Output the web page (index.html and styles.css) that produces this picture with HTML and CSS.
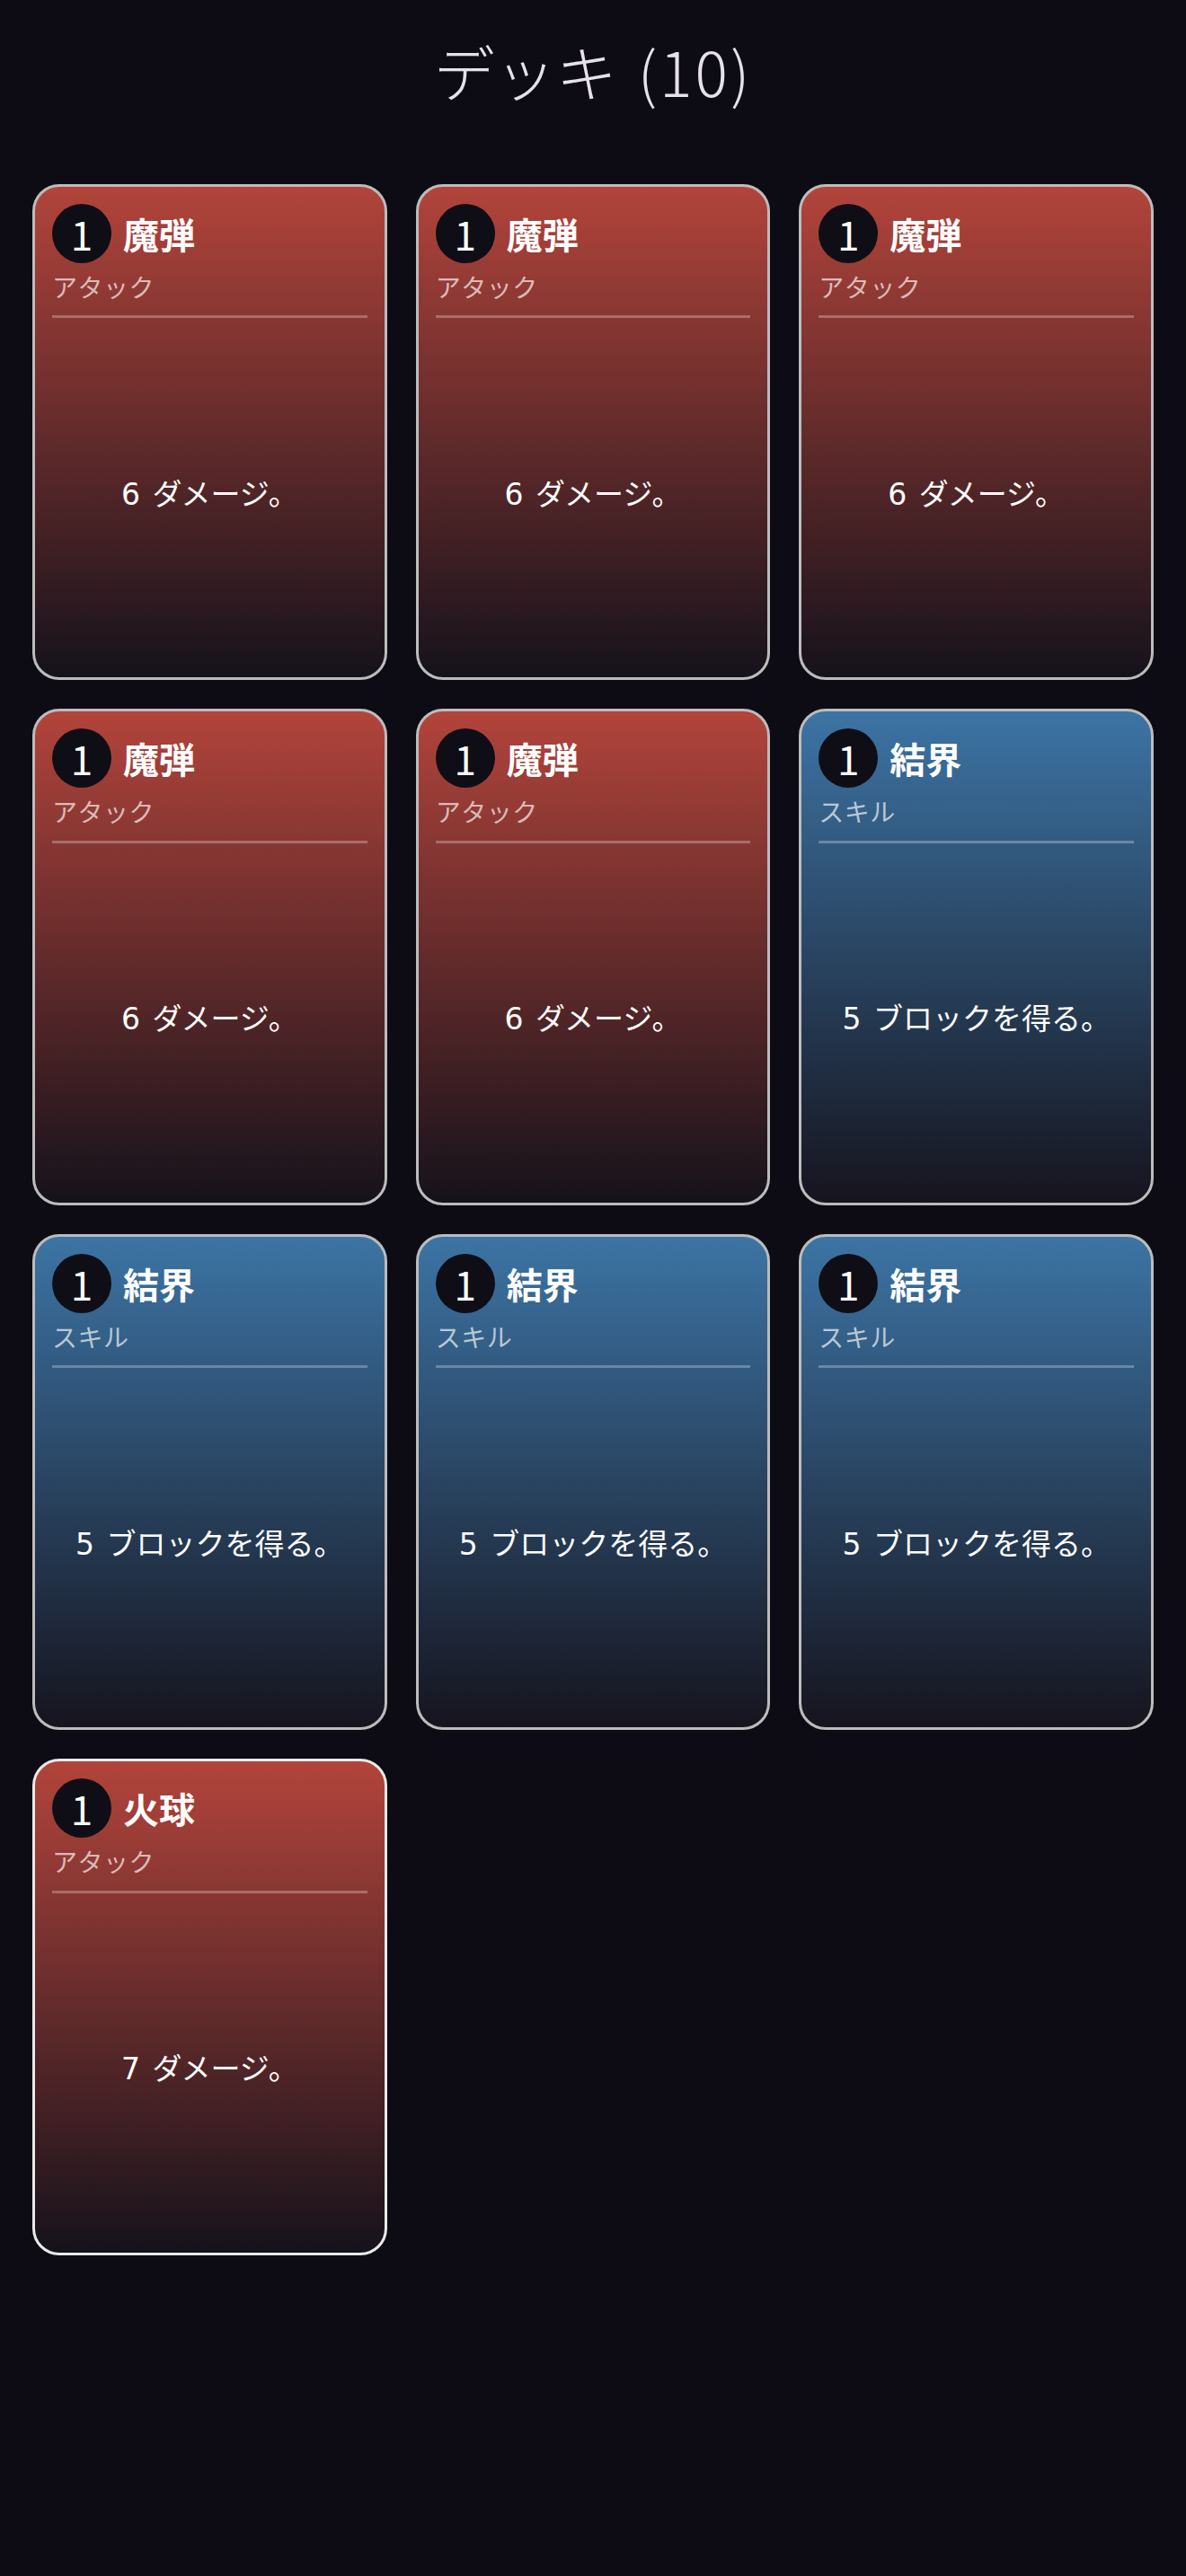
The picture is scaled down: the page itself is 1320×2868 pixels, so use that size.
FILE: index.html
```html
<!DOCTYPE html>
<html lang="ja">
<head>
<meta charset="utf-8">
<title>デッキ</title>
<link rel="stylesheet" href="styles.css">
</head>
<body>
<main class="page">
  <h1 class="title">デッキ <span class="count">(10)</span></h1>
  <div class="deck">
    <div class="card card-attack">
      <div class="card-head">
        <div class="card-top"><span class="cost">1</span><span class="name">魔弾</span></div>
        <div class="type">アタック</div>
      </div>
      <div class="card-body">6 ダメージ。</div>
    </div>
    <div class="card card-attack">
      <div class="card-head">
        <div class="card-top"><span class="cost">1</span><span class="name">魔弾</span></div>
        <div class="type">アタック</div>
      </div>
      <div class="card-body">6 ダメージ。</div>
    </div>
    <div class="card card-attack">
      <div class="card-head">
        <div class="card-top"><span class="cost">1</span><span class="name">魔弾</span></div>
        <div class="type">アタック</div>
      </div>
      <div class="card-body">6 ダメージ。</div>
    </div>
    <div class="card card-attack">
      <div class="card-head">
        <div class="card-top"><span class="cost">1</span><span class="name">魔弾</span></div>
        <div class="type">アタック</div>
      </div>
      <div class="card-body">6 ダメージ。</div>
    </div>
    <div class="card card-attack">
      <div class="card-head">
        <div class="card-top"><span class="cost">1</span><span class="name">魔弾</span></div>
        <div class="type">アタック</div>
      </div>
      <div class="card-body">6 ダメージ。</div>
    </div>
    <div class="card card-skill">
      <div class="card-head">
        <div class="card-top"><span class="cost">1</span><span class="name">結界</span></div>
        <div class="type">スキル</div>
      </div>
      <div class="card-body">5 ブロックを得る。</div>
    </div>
    <div class="card card-skill">
      <div class="card-head">
        <div class="card-top"><span class="cost">1</span><span class="name">結界</span></div>
        <div class="type">スキル</div>
      </div>
      <div class="card-body">5 ブロックを得る。</div>
    </div>
    <div class="card card-skill">
      <div class="card-head">
        <div class="card-top"><span class="cost">1</span><span class="name">結界</span></div>
        <div class="type">スキル</div>
      </div>
      <div class="card-body">5 ブロックを得る。</div>
    </div>
    <div class="card card-skill">
      <div class="card-head">
        <div class="card-top"><span class="cost">1</span><span class="name">結界</span></div>
        <div class="type">スキル</div>
      </div>
      <div class="card-body">5 ブロックを得る。</div>
    </div>
    <div class="card card-attack card-new">
      <div class="card-head">
        <div class="card-top"><span class="cost">1</span><span class="name">火球</span></div>
        <div class="type">アタック</div>
      </div>
      <div class="card-body">7 ダメージ。</div>
    </div>
  </div>
</main>
</body>
</html>
```

FILE: styles.css
```css
html, body {
  margin: 0;
  padding: 0;
  background: #0d0b14;
}

body {
  font-family: "Noto Sans CJK JP", "Noto Sans", sans-serif;
  color: #ffffff;
  min-height: 2868px;
}

.page {
  padding: 0 36px 36px;
}

.title {
  margin: 38px 0 85px;
  text-align: center;
  font-size: 68px;
  line-height: 1.2;
  font-weight: 300;
  color: #e6e1ea;
  word-spacing: 8px;
}

.count {
  letter-spacing: 3px;
}

.deck {
  display: grid;
  grid-template-columns: repeat(3, 1fr);
  gap: 32px;
}

.card {
  aspect-ratio: 5 / 7;
  box-sizing: border-box;
  border: 3px solid #bcbcbc;
  border-radius: 30px;
  padding: 19px;
  display: flex;
  flex-direction: column;
  overflow: hidden;
}

.card-new {
  border-color: #e9e9e9;
}

.card-attack {
  background: linear-gradient(180deg, #b2443b 0%, #15121b 100%);
}

.card-skill {
  background: linear-gradient(180deg, #3c74a4 0%, #16141e 100%);
}

.card-head {
  border-bottom: 3px solid rgba(255, 255, 255, 0.27);
  padding-bottom: 15px;
}

.card-top {
  display: flex;
  align-items: center;
  gap: 13px;
}

.cost {
  width: 66px;
  height: 66px;
  border-radius: 50%;
  background: #0f0e16;
  display: flex;
  align-items: center;
  justify-content: center;
  font-size: 44px;
  font-weight: 400;
  line-height: 1;
  color: #ffffff;
}

.name {
  font-size: 40px;
  font-weight: 700;
  line-height: 1.2;
  color: #ffffff;
}

.type {
  margin-top: 10px;
  font-size: 28px;
  line-height: 1.2;
  letter-spacing: 0.5px;
  color: rgba(255, 255, 255, 0.66);
}

.card-body {
  flex: 1;
  display: flex;
  align-items: center;
  justify-content: center;
  text-align: center;
  padding-top: 6px;
  font-family: "DejaVu Sans", "Noto Sans CJK JP", sans-serif;
  font-size: 33px;
  word-spacing: 3px;
  color: #ffffff;
}
```
